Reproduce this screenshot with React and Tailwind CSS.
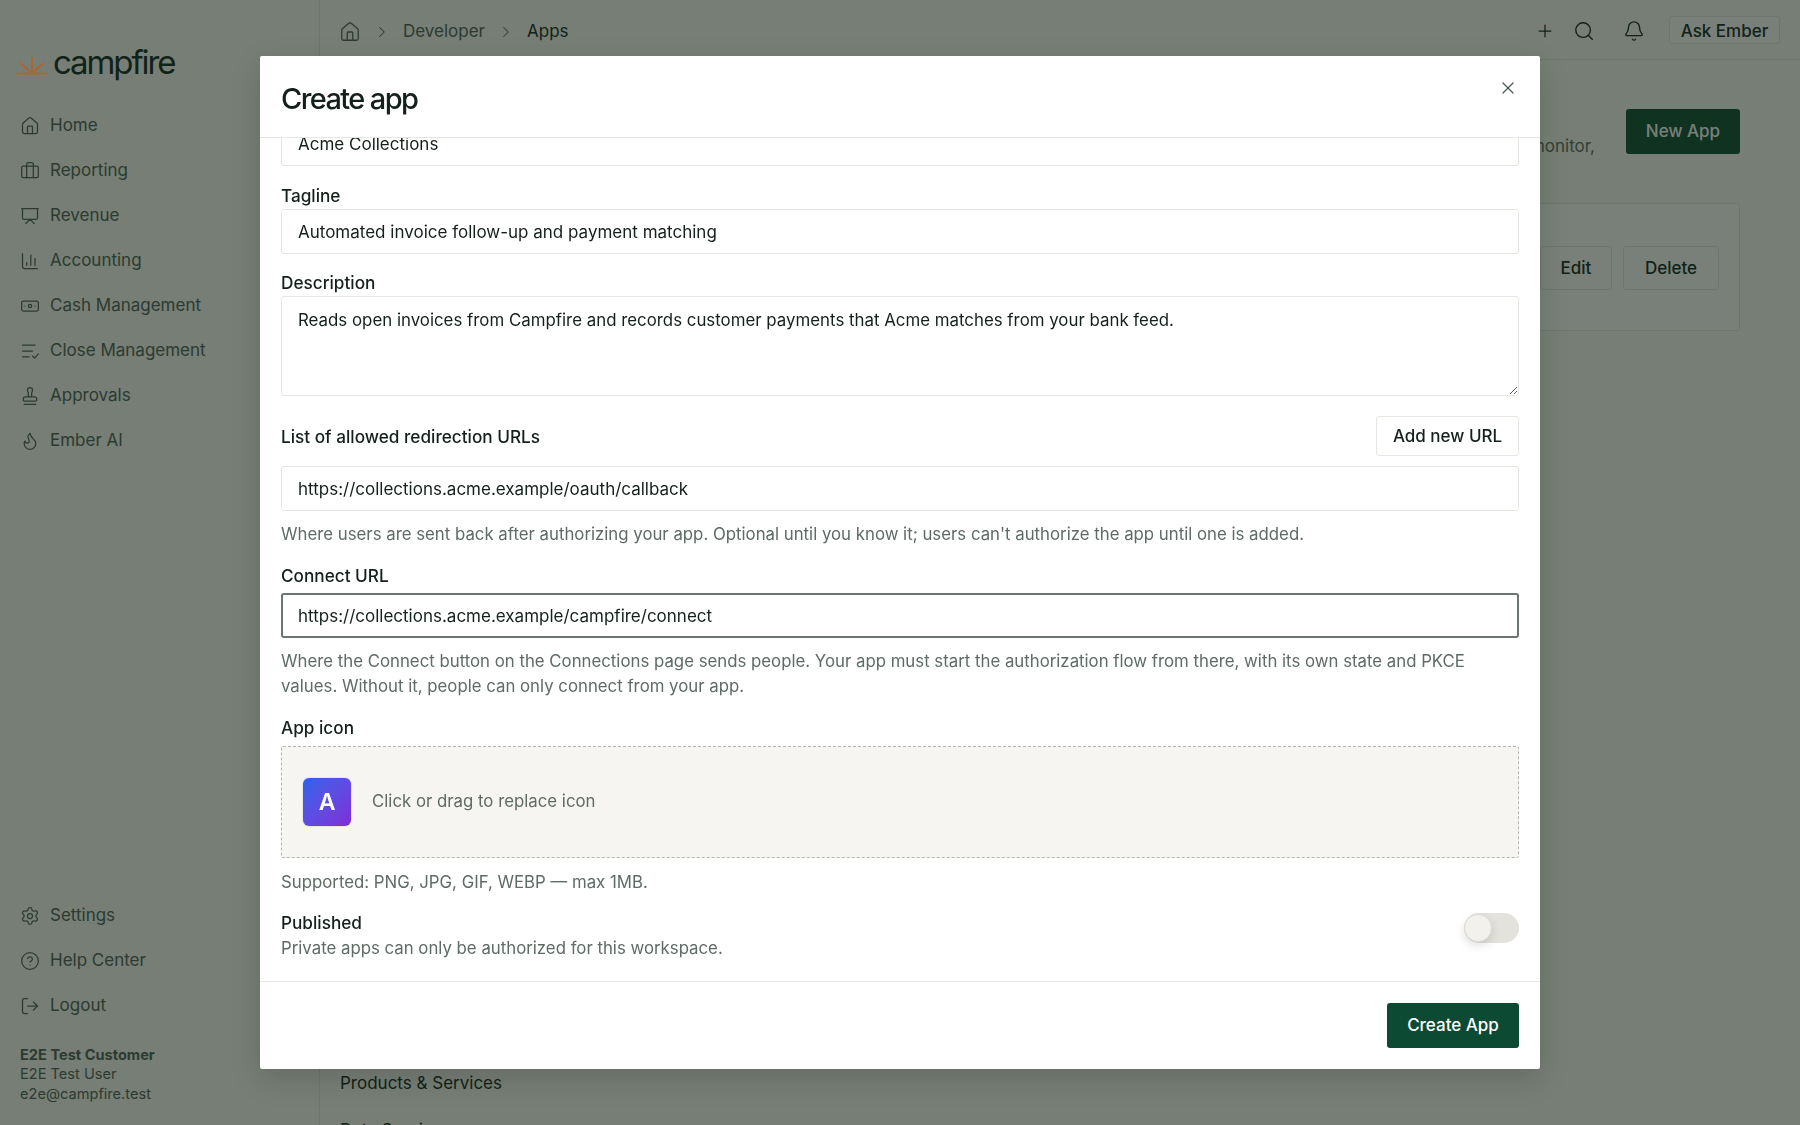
import { useEffect, useRef } from "react"
import {
  Banknote,
  Bell,
  Briefcase,
  ChartColumn,
  ChevronRight,
  CircleHelp,
  Flame,
  House,
  LogOut,
  Plus,
  Presentation,
  Search,
  Settings,
  Stamp,
  X,
} from "lucide-react"

const CloseIcon = (props) => (
  <svg viewBox="0 0 24 24" fill="none" stroke="currentColor" strokeWidth="1.6" strokeLinecap="round" strokeLinejoin="round" {...props}>
    <path d="M3 5h15" />
    <path d="M3 12h12" />
    <path d="M3 19h8" />
    <path d="M15 18l2.5 2.5L22 15.5" />
  </svg>
)

const Logo = () => (
  <div className="flex items-center gap-[4px] pl-[15px]">
    <svg viewBox="0 0 34 22" className="relative z-10 mt-[4px] h-[22px] w-[34px]" fill="none" stroke="#b0652e" strokeWidth="1.8">
      <path d="M1 17.5h32" />
      <path d="M17 17V1" />
      <path d="M17 17L5 7" />
      <path d="M17 17L29 7" />
    </svg>
    <span className="mb-[4px] text-[33px] leading-none tracking-[-2.1px] text-[#12261e]">campfire</span>
  </div>
)

const mainNav = [
  ["Home", House],
  ["Reporting", Briefcase],
  ["Revenue", Presentation],
  ["Accounting", ChartColumn],
  ["Cash Management", Banknote],
  ["Close Management", CloseIcon],
  ["Approvals", Stamp],
  ["Ember AI", Flame],
]

const bottomNav = [
  ["Settings", Settings],
  ["Help Center", CircleHelp],
  ["Logout", LogOut],
]

const NavItem = ({ label, icon: Icon }) => (
  <a className="flex h-[45px] items-center gap-[10px] pl-[20px] text-[17px] text-[#4f6058]">
    <Icon size={20} strokeWidth={1.5} className="h-[20px] w-[20px] shrink-0" />
    <span>{label}</span>
  </a>
)

const Label = ({ children, className = "mb-[4px]" }) => (
  <label className={`block text-[17.2px] leading-[21px] font-medium text-[#14201a] ${className}`}>{children}</label>
)

const inputClass =
  "block h-[45px] w-full rounded-[3px] border border-[#e8e6e1] bg-white px-[16px] text-[17px] text-[#14201a] outline-none"

const Help = ({ children }) => <p className="text-[16.8px] leading-[25px] text-[#5f6b65]">{children}</p>

export default function App() {
  const scrollRef = useRef(null)

  // the form opens scrolled to its end
  useEffect(() => {
    if (scrollRef.current) scrollRef.current.scrollTop = scrollRef.current.scrollHeight
  }, [])

  return (
    <div className="relative flex h-screen overflow-hidden bg-[#fafaf6] font-['Inter',sans-serif]">
      {/* Sidebar */}
      <aside className="flex w-[320px] shrink-0 flex-col border-r border-[#e8e6e1] pt-[46px] pb-[21px]">
        <Logo />
        <nav className="mt-[20px]">
          {mainNav.map(([label, icon]) => (
            <NavItem key={label} label={label} icon={icon} />
          ))}
        </nav>
        <nav className="mt-auto">
          {bottomNav.map(([label, icon]) => (
            <NavItem key={label} label={label} icon={icon} />
          ))}
        </nav>
        <div className="mt-[17px] pl-[20px] text-[14.6px] leading-[19.5px] text-[#4f6058]">
          <p className="font-bold">E2E Test Customer</p>
          <p>E2E Test User</p>
          <p>e2e@campfire.test</p>
        </div>
      </aside>

      {/* Main */}
      <div className="flex min-w-0 flex-1 flex-col">
        <header className="flex h-[60px] shrink-0 items-center border-b border-[#e8e6e1] pt-[4px] pr-[20px] pl-[19px] text-[17px]">
          <House size={22} strokeWidth={1.4} className="text-[#4f6058]" />
          <ChevronRight size={18} strokeWidth={1.4} className="ml-[12px] text-[#4f6058]" />
          <span className="ml-[12px] text-[#4f6058]">Developer</span>
          <ChevronRight size={18} strokeWidth={1.4} className="ml-[12px] text-[#4f6058]" />
          <span className="ml-[12px] text-[#12261e]">Apps</span>
          <div className="mb-[2px] ml-auto flex items-center text-[#12261e]">
            <Plus size={20} strokeWidth={1.5} />
            <Search size={22} strokeWidth={1.5} className="ml-[18px]" />
            <Bell size={22} strokeWidth={1.5} className="ml-[28px]" />
            <button className="mb-[2px] ml-[24px] h-[28px] w-[111px] rounded-[3px] border border-[#e8e6e1] bg-[#ffffff] pt-[2px] text-[17px] font-medium">
              Ask Ember
            </button>
          </div>
        </header>

        <main className="flex flex-1 flex-col pr-[60px] pl-[20px]">
          <div className="mt-[49px] flex items-start">
            <p className="mt-[24px] flex-1 text-right text-[17px] leading-[26px] text-[#5f6b65]">
              Build apps on the Campfire API, then manage, test and monitor,
            </p>
            <button className="ml-[31px] h-[45px] w-[114px] rounded-[3px] bg-[#0c4a34] pt-[1px] text-[17px] font-medium text-white">
              New App
            </button>
          </div>
          <div className="mt-[44px] flex h-[128px] items-center justify-end rounded-[3px] border border-[#e8e6e1] bg-[#ffffff] pt-[2px] pr-[20px]">
            <button className="h-[44px] w-[72px] rounded-[3px] border border-[#e8e6e1] pt-[1px] text-[17px] font-medium text-[#12261e]">
              Edit
            </button>
            <button className="ml-[11px] h-[44px] w-[96px] rounded-[3px] border border-[#e8e6e1] pt-[1px] text-[17px] font-medium text-[#12261e]">
              Delete
            </button>
          </div>
          <div className="mt-[740px] flex flex-col gap-[23px] text-[17px] leading-[24px] text-[#12261e]">
            <p>Products &amp; Services</p>
            <p>Data Services</p>
          </div>
        </main>
      </div>

      {/* Modal */}
      <div className="fixed inset-0 flex items-center justify-center bg-[rgba(17,32,20,0.57)]">
        <div className="flex h-[1013px] w-[1280px] flex-col rounded-[2px] bg-white shadow-[0_10px_30px_rgba(0,0,0,0.15)]">
          <div className="relative flex h-[82px] shrink-0 items-center border-b border-[#e8e6e1] px-[21px]">
            <h2 className="mt-[4px] text-[29px] leading-none font-medium tracking-[-1.6px] text-[#14201a]">Create app</h2>
            <button className="absolute top-[22px] right-[22px] text-[#4b5a52]">
              <X size={20} strokeWidth={1.5} />
            </button>
          </div>

          <div ref={scrollRef} className="flex-1 overflow-y-auto px-[21px] pb-[20px] [scrollbar-width:none]">
            <div className="pt-[18px]">
              <Label>Name</Label>
              <input className={inputClass} defaultValue="Acme Collections" />
            </div>
            <div className="mt-[19px]">
              <Label className="mb-[3px]">Tagline</Label>
              <input className={inputClass} defaultValue="Automated invoice follow-up and payment matching" />
            </div>
            <div className="mt-[18px]">
              <Label className="mb-[3px]">Description</Label>
              <textarea
                className="block h-[100px] w-full resize-y rounded-[3px] border border-[#e8e6e1] bg-white px-[16px] py-[11px] text-[16.85px] leading-[25px] text-[#14201a] outline-none"
                defaultValue="Reads open invoices from Campfire and records customer payments that Acme matches from your bank feed."
              />
            </div>
            <div className="mt-[20px] flex items-center justify-between">
              <Label className="">List of allowed redirection URLs</Label>
              <button className="h-[40px] w-[143px] rounded-[3px] border border-[#e8e6e1] pt-[2px] text-[17px] font-medium text-[#14201a]">
                Add new URL
              </button>
            </div>
            <input
              className={`${inputClass} mt-[10px]`}
              defaultValue="https://collections.acme.example/oauth/callback"
            />
            <div className="mt-[11px]">
              <Help>
                Where users are sent back after authorizing your app. Optional until you know it; users can't authorize
                the app until one is added.
              </Help>
            </div>
            <div className="mt-[18px]">
              <Label className="mb-[7px]">Connect URL</Label>
              <input
                className="block h-[45px] w-full rounded-[3px] border-2 border-[#6b746f] bg-white px-[15px] text-[17px] text-[#14201a] outline-none"
                defaultValue="https://collections.acme.example/campfire/connect"
              />
            </div>
            <div className="mt-[11px]">
              <Help>
                Where the Connect button on the Connections page sends people. Your app must start the authorization
                flow from there, with its own state and PKCE values. Without it, people can only connect from your app.
              </Help>
            </div>
            <div className="mt-[18px]">
              <Label className="mb-[8px]">App icon</Label>
              <div className="flex h-[112px] items-center gap-[21px] rounded-[2px] border border-dashed border-[#b5b5ae] bg-[#f6f5f2] pl-[21px]">
                <div className="flex h-[48px] w-[48px] items-center justify-center rounded-[6px] bg-gradient-to-br from-[#2563eb] to-[#7c2bd9] text-[23px] font-semibold text-white ring-1 ring-[#e8e6e1]">
                  A
                </div>
                <span className="text-[16.8px] text-[#5f6b65]">Click or drag to replace icon</span>
              </div>
            </div>
            <div className="mt-[12px]">
              <Help>Supported: PNG, JPG, GIF, WEBP — max 1MB.</Help>
            </div>
            <div className="mt-[17px] flex items-start justify-between">
              <div>
                <Label className="mb-[3px]">Published</Label>
                <Help>Private apps can only be authorized for this workspace.</Help>
              </div>
              <button className="mt-[1px] flex h-[30px] w-[55px] items-center rounded-full bg-[#e4e2dc]">
                <span className="h-[28px] w-[28px] rounded-full border border-[#dedcd6] bg-[#f3f1ec] shadow-[0_4px_10px_rgba(0,0,0,0.12)]" />
              </button>
            </div>
          </div>

          <div className="flex h-[88px] shrink-0 items-center justify-end border-t border-[#e8e6e1] pr-[21px]">
            <button className="h-[45px] w-[132px] rounded-[3px] bg-[#0c4a34] text-[17px] font-medium text-white">
              Create App
            </button>
          </div>
        </div>
      </div>
    </div>
  )
}
